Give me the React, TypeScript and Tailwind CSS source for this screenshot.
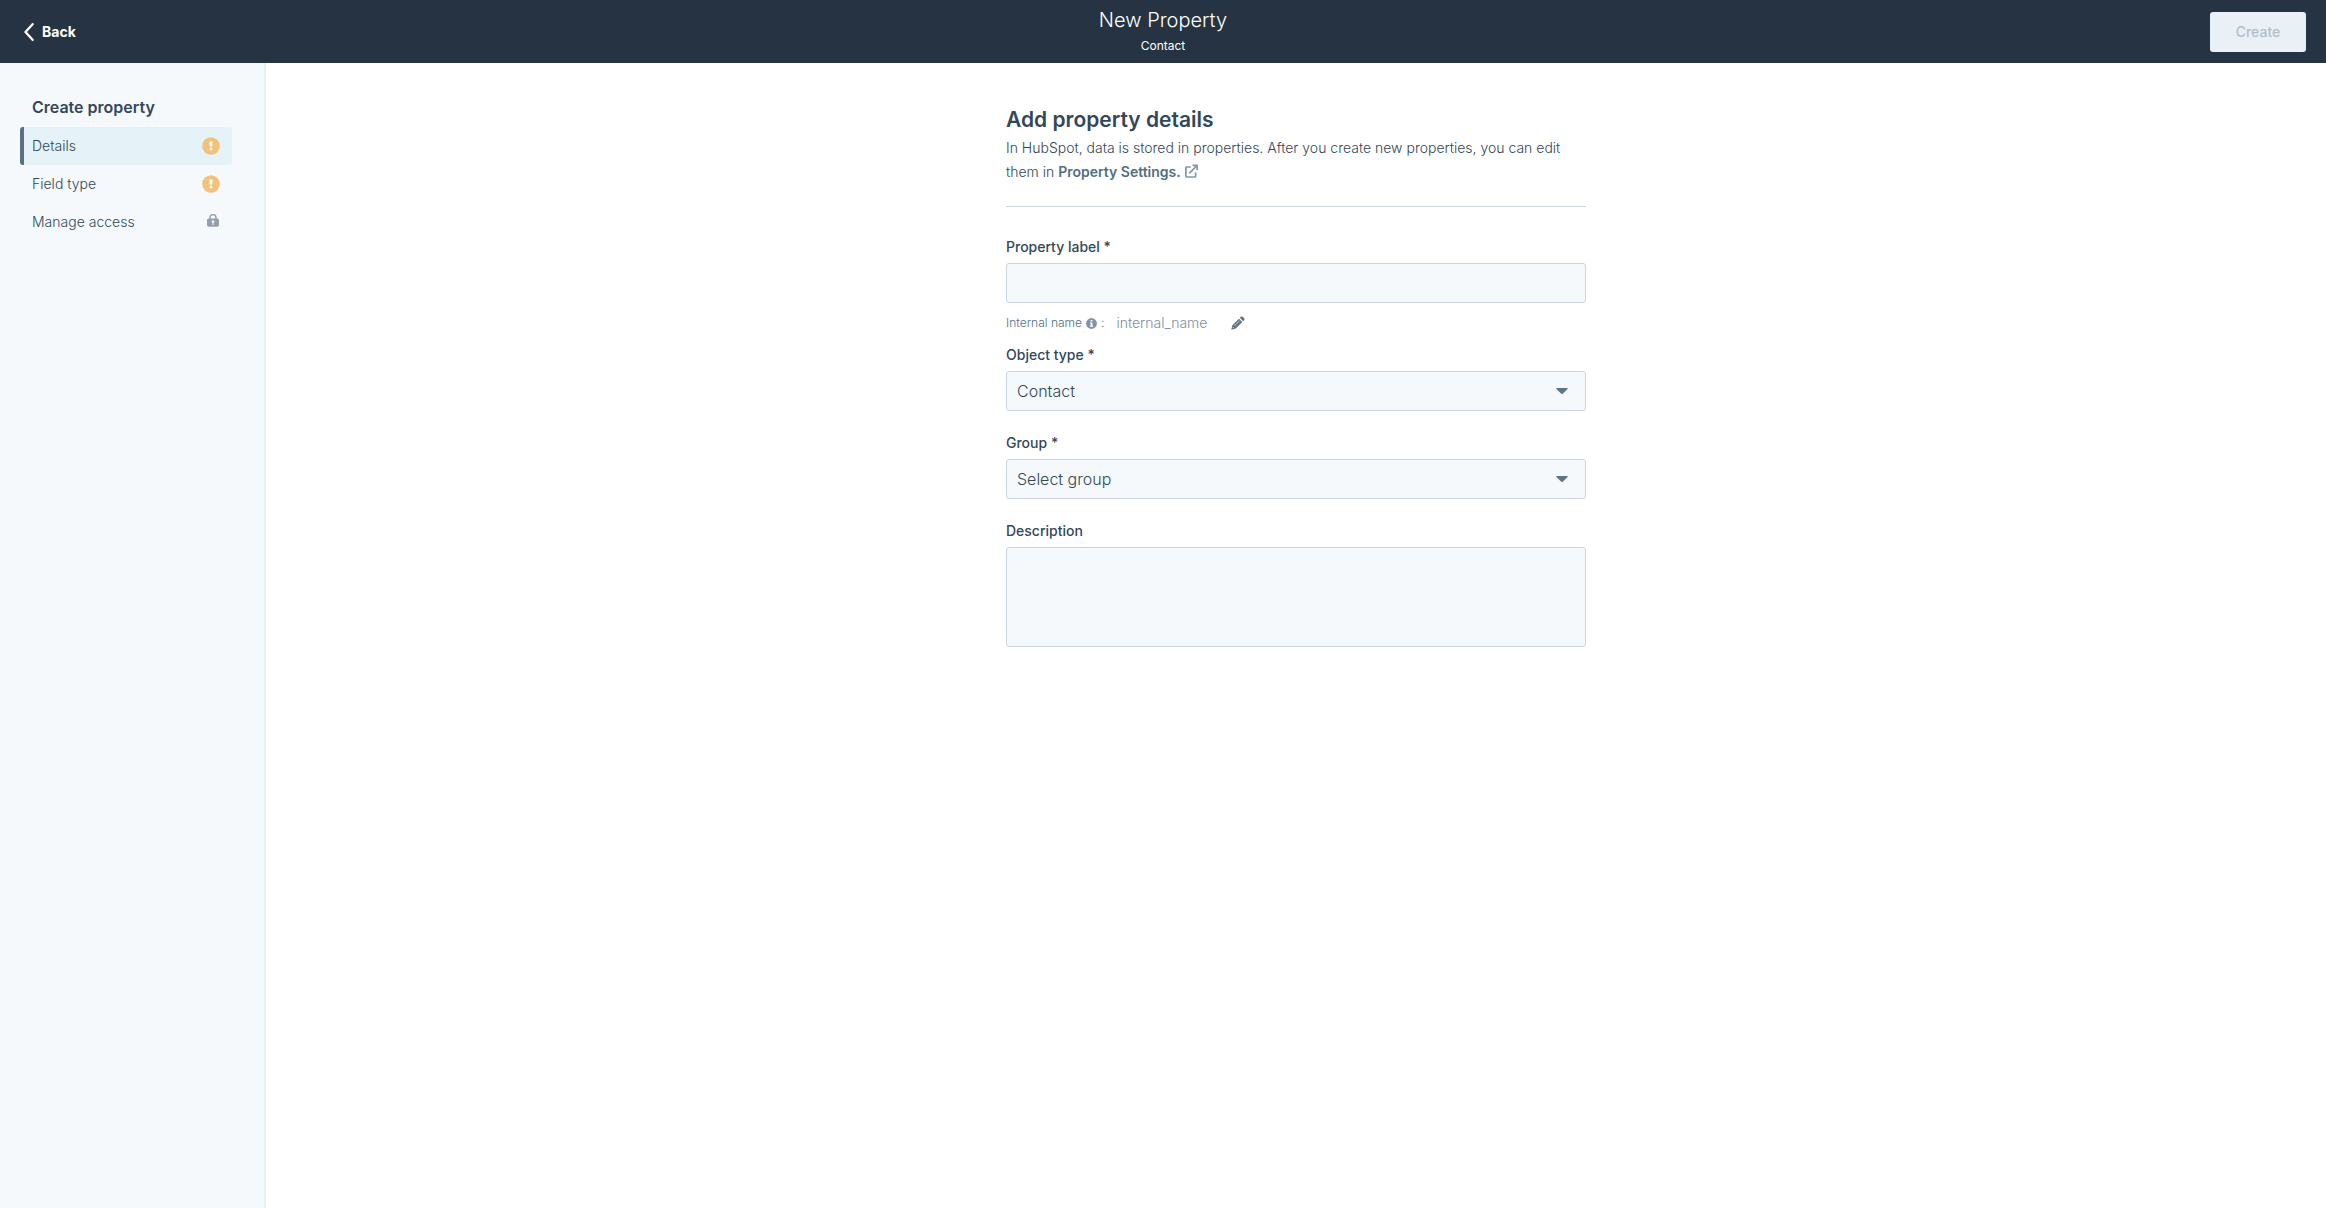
import { useState } from "react";
import type { ReactNode } from "react";

type NavItem = {
  label: string;
  status: "warning" | "locked";
};

const NAV_ITEMS: NavItem[] = [
  { label: "Details", status: "warning" },
  { label: "Field type", status: "warning" },
  { label: "Manage access", status: "locked" },
];

function ChevronLeftIcon() {
  return (
    <svg className="h-[18px] w-[10px]" viewBox="0 0 10 18" fill="none" aria-hidden="true">
      <path
        d="M8.6 1.2 1.5 9l7.1 7.8"
        stroke="#fff"
        strokeWidth="2.3"
        strokeLinecap="round"
        strokeLinejoin="round"
      />
    </svg>
  );
}

function WarningIcon() {
  return (
    <svg className="h-[18px] w-[18px]" viewBox="0 0 18 18" aria-hidden="true">
      <circle cx="9" cy="9" r="8.8" fill="#f2c27a" />
      <path d="M7.4 4.4h3.2l-.4 5.2H7.8z" fill="#fff" />
      <circle cx="9" cy="12" r="1.5" fill="#fff" />
    </svg>
  );
}

function LockIcon() {
  return (
    <svg className="mr-px mb-1 h-[13px] w-3" viewBox="0 0 12 13" aria-hidden="true">
      <path d="M3 6V3.6a3 3 0 0 1 6 0V6" fill="none" stroke="#949fae" strokeWidth="1.5" />
      <rect x="0" y="4.4" width="12" height="8.4" rx="1.8" fill="#949fae" />
      <circle cx="6" cy="7.5" r="1.2" fill="#f5f8fa" />
      <path d="M5.5 8h1v3h-1z" fill="#f5f8fa" />
    </svg>
  );
}

function ExternalLinkIcon() {
  return (
    <svg
      className="ml-1 inline-block h-[14px] w-[13px] align-[-1px]"
      viewBox="0 0 13 14"
      fill="none"
      stroke="#8496a6"
      strokeWidth="1.7"
      aria-hidden="true"
    >
      <path d="M5.8 3H1.6a.7.7 0 0 0-.7.7v8.6c0 .4.3.7.7.7h8.3c.4 0 .7-.3.7-.7V8.4" />
      <path d="M4.3 9.3 11.4 2M7.6 1.4h4.5V6" />
    </svg>
  );
}

function InfoIcon() {
  return (
    <svg className="h-[11px] w-[11px]" viewBox="0 0 11 11" aria-hidden="true">
      <circle cx="5.5" cy="5.5" r="5.4" fill="#8494a5" />
      <path d="M4.6 1.9h1.8v1.5H4.6zM4 4.4h2.4v3.3h.7v1.1H3.9V7.7h.7V5.4H4z" fill="#fff" />
    </svg>
  );
}

function PencilIcon() {
  return (
    <svg className="h-[14px] w-[14px]" viewBox="0 0 13 13" aria-hidden="true">
      <path
        d="M9.1.8a1.3 1.3 0 0 1 1.8 0l1.3 1.3c.5.5.5 1.3 0 1.8l-.9.9-3.1-3.1zM7.4 2.5l3.1 3.1-6.3 6.2L.3 12.8l.9-4.1z"
        fill="#5f7485"
      />
      <path d="M8 4.3 3.2 9.2" stroke="#dfe6ec" strokeWidth=".7" />
      <path d="m1.5 10 1.6 1.6" stroke="#fff" strokeWidth=".5" />
    </svg>
  );
}

function CaretIcon() {
  return (
    <svg
      className="pointer-events-none absolute top-[17px] right-[18px] h-[7px] w-3"
      viewBox="0 0 12 7"
      aria-hidden="true"
    >
      <path d="M.8 0h10.4c.6 0 .8.6.4 1L6.7 5.8c-.4.4-1 .4-1.4 0L.4 1C0 .6.2 0 .8 0z" fill="#5c7688" />
    </svg>
  );
}

function FieldLabel({ htmlFor, children }: { htmlFor: string; children: ReactNode }) {
  return (
    <label htmlFor={htmlFor} className="mb-1 block text-sm leading-6 font-medium text-[#33475b]">
      {children}
    </label>
  );
}

function SelectField({
  id,
  label,
  value,
  options,
  onChange,
}: {
  id: string;
  label: string;
  value: string;
  options: string[];
  onChange: (value: string) => void;
}) {
  return (
    <div className="mb-5">
      <FieldLabel htmlFor={id}>{label}</FieldLabel>
      <div className="relative">
        <select
          id={id}
          value={value}
          onChange={(e) => onChange(e.target.value)}
          className="h-10 w-full appearance-none rounded-[3px] border border-[#cbd6e2] bg-[#f5f9fc] px-[10px] text-base font-light text-[#33475b]"
        >
          {options.map((option) => (
            <option key={option} value={option}>
              {option}
            </option>
          ))}
        </select>
        <CaretIcon />
      </div>
    </div>
  );
}

export default function App() {
  const [activeItem, setActiveItem] = useState("Details");
  const [propertyLabel, setPropertyLabel] = useState("");
  const [objectType, setObjectType] = useState("Contact");
  const [group, setGroup] = useState("Select group");
  const [description, setDescription] = useState("");

  return (
    <div className="flex min-h-screen flex-col bg-white font-['Inter',sans-serif] text-[#33475b]">
      <header className="grid h-[63px] grid-cols-3 items-center bg-[#253342] px-5 text-white">
        <button type="button" className="flex items-center gap-2 justify-self-start px-1 text-sm font-bold">
          <ChevronLeftIcon />
          Back
        </button>
        <div className="text-center">
          <h1 className="mb-1 text-xl leading-6 font-light">New Property</h1>
          <p className="text-xs leading-5">Contact</p>
        </div>
        <button
          type="button"
          disabled
          className="h-10 w-24 justify-self-end rounded-[3px] bg-[#e9f1f6] text-sm font-medium text-[#b3bdc9]"
        >
          Create
        </button>
      </header>

      <div className="flex flex-1">
        <aside className="w-[266px] shrink-0 border-r-2 border-[#e5f0f5] bg-[#f5f9fc] pt-8 pr-8 pl-5">
          <h2 className="mb-2 pl-3 text-base leading-6 font-semibold">Create property</h2>
          <nav>
            {NAV_ITEMS.map((item) => (
              <button
                key={item.label}
                type="button"
                onClick={() => setActiveItem(item.label)}
                className={`flex h-[38px] w-full items-center justify-between rounded-[3px] border-l-4 pr-3 pl-2 text-sm font-light ${
                  item.label === activeItem
                    ? "border-[#5c7080] bg-[#e5f2f8]"
                    : "border-transparent"
                }`}
              >
                {item.label}
                {item.status === "warning" ? <WarningIcon /> : <LockIcon />}
              </button>
            ))}
          </nav>
        </aside>

        <main className="flex-1 px-6 pt-[45px] pb-10">
          <form className="mx-auto max-w-[580px]">
            <h2 className="mb-1 text-[21px] leading-6 font-semibold">Add property details</h2>
            <p className="text-sm leading-6 font-light">
              In HubSpot, data is stored in properties. After you create new properties, you can edit
              them in{" "}
              <a href="#property-settings" className="font-semibold text-[#516f82]">
                Property Settings.
                <ExternalLinkIcon />
              </a>
            </p>
            <hr className="mt-[22px] mb-7 border-[#cbd6e2]" />

            <FieldLabel htmlFor="property-label">Property label *</FieldLabel>
            <input
              id="property-label"
              type="text"
              value={propertyLabel}
              onChange={(e) => setPropertyLabel(e.target.value)}
              className="block h-10 w-full rounded-[3px] border border-[#cbd6e2] bg-[#f5f9fc] px-[10px] text-base font-light"
            />
            <div className="flex h-10 items-center font-light">
              <span className="flex items-center text-xs text-[#516f82]">
                Internal name
                <span className="mx-1">
                  <InfoIcon />
                </span>
                :
              </span>
              <span className="ml-3 text-sm text-[#7c8fa0]">internal_name</span>
              <button type="button" aria-label="Edit internal name" className="ml-6">
                <PencilIcon />
              </button>
            </div>

            <SelectField
              id="object-type"
              label="Object type *"
              value={objectType}
              options={["Contact", "Company", "Deal", "Ticket"]}
              onChange={setObjectType}
            />
            <SelectField
              id="group"
              label="Group *"
              value={group}
              options={["Select group", "Contact information"]}
              onChange={setGroup}
            />

            <FieldLabel htmlFor="description">Description</FieldLabel>
            <textarea
              id="description"
              value={description}
              onChange={(e) => setDescription(e.target.value)}
              className="block h-[100px] w-full resize-none rounded-[3px] border border-[#cbd6e2] bg-[#f5f9fc] px-[10px] py-2 text-base font-light"
            />
          </form>
        </main>
      </div>
    </div>
  );
}
